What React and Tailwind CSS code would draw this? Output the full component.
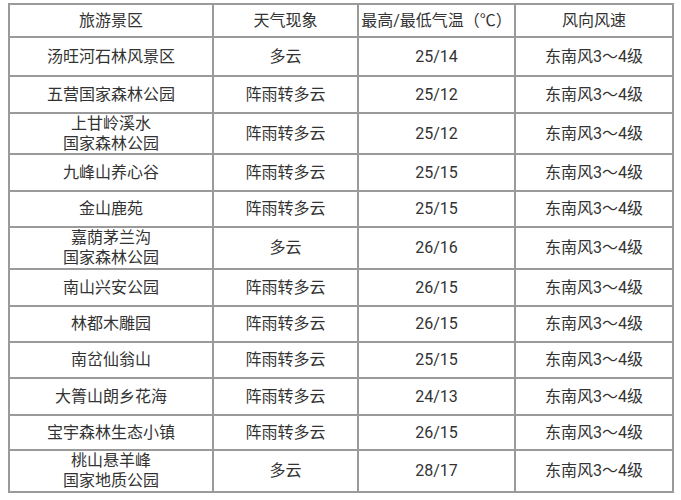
const rows = [
  { name: ["汤旺河石林风景区"], weather: "多云", temp: "25/14", h: "h-[37px]" },
  { name: ["五营国家森林公园"], weather: "阵雨转多云", temp: "25/12", h: "h-[35px]" },
  { name: ["上甘岭溪水", "国家森林公园"], weather: "阵雨转多云", temp: "25/12", h: "h-[39px]" },
  { name: ["九峰山养心谷"], weather: "阵雨转多云", temp: "25/15", h: "h-[35px]" },
  { name: ["金山鹿苑"], weather: "阵雨转多云", temp: "25/15", h: "h-[34px]" },
  { name: ["嘉荫茅兰沟", "国家森林公园"], weather: "多云", temp: "26/16", h: "h-[40px]" },
  { name: ["南山兴安公园"], weather: "阵雨转多云", temp: "26/15", h: "h-[35px]" },
  { name: ["林都木雕园"], weather: "阵雨转多云", temp: "26/15", h: "h-[34px]" },
  { name: ["南岔仙翁山"], weather: "阵雨转多云", temp: "25/15", h: "h-[34px]" },
  { name: ["大箐山朗乡花海"], weather: "阵雨转多云", temp: "24/13", h: "h-[35px]" },
  { name: ["宝宇森林生态小镇"], weather: "阵雨转多云", temp: "26/15", h: "h-[33px]" },
  { name: ["桃山悬羊峰", "国家地质公园"], weather: "多云", temp: "28/17", h: "h-[40px]" },
]

function Cell({ children, h }) {
  return (
    <div className={`bg-white flex flex-col items-center justify-center text-center leading-[20px] ${h}`}>
      {children}
    </div>
  )
}

export default function App() {
  return (
    <div
      className="bg-white w-[681px] h-[500px] pt-[3px] pl-[8px] text-[16px] text-[#333333]"
      style={{ fontFamily: 'Roboto, "Noto Sans CJK SC", sans-serif' }}
    >
      <div className="grid grid-cols-[202px_143px_155px_156px] gap-[2px] p-[2px] bg-[#9a9a9a] w-[666px]">
        <Cell h="h-[31px]">旅游景区</Cell>
        <Cell h="h-[31px]">天气现象</Cell>
        <Cell h="h-[31px]">最高/最低气温（℃）</Cell>
        <Cell h="h-[31px]">风向风速</Cell>
        {rows.map((r, i) => (
          <div key={i} className="contents">
            <Cell h={r.h}>
              {r.name.map((n) => (
                <span key={n}>{n}</span>
              ))}
            </Cell>
            <Cell h={r.h}>{r.weather}</Cell>
            <Cell h={r.h}>{r.temp}</Cell>
            <Cell h={r.h}>东南风3～4级</Cell>
          </div>
        ))}
      </div>
    </div>
  )
}
